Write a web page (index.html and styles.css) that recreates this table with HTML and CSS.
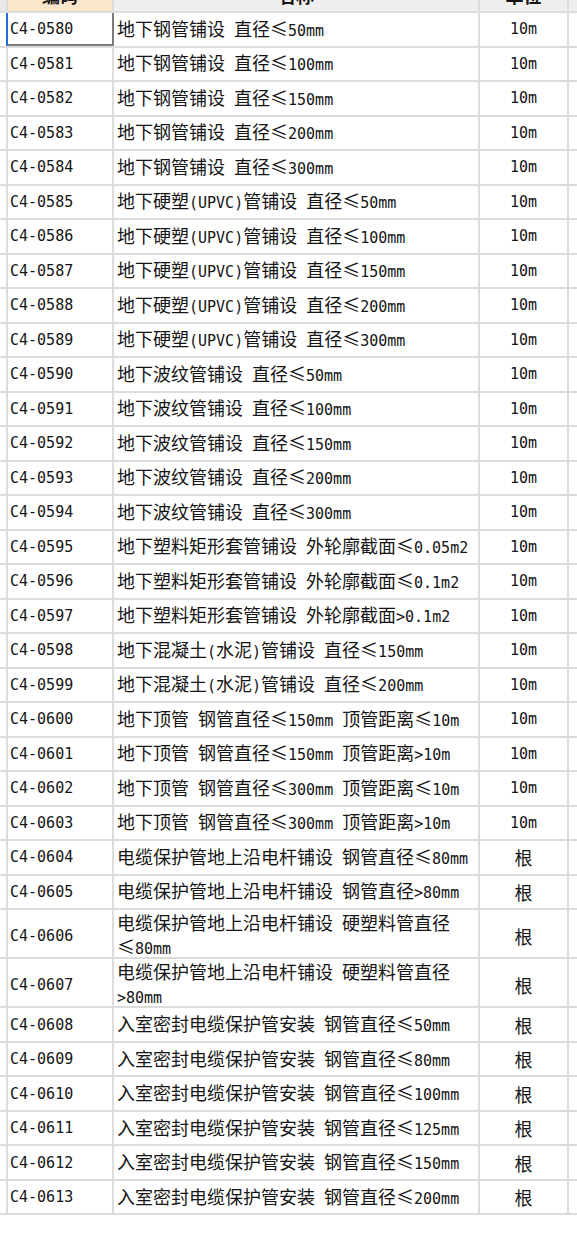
FILE: index.html
```html
<!DOCTYPE html>
<html lang="zh-CN">
<head>
<meta charset="utf-8">
<link rel="stylesheet" href="styles.css">
</head>
<body>
<div class="sheet">
  <div class="row head">
    <div class="strip"></div>
    <div class="c code-h">编码</div>
    <div class="c name-h">名称</div>
    <div class="c unit-h">单位</div>
    <div class="edge"></div>
  </div>
  <div class="row"><div class="strip"></div><div class="c code sel">C4-0580</div><div class="c name"><span class="t">地下钢管铺设 直径≤<span class="a">50mm</span></span></div><div class="c unit"><span class="a">10m</span></div><div class="edge"></div></div>
  <div class="row"><div class="strip"></div><div class="c code">C4-0581</div><div class="c name"><span class="t">地下钢管铺设 直径≤<span class="a">100mm</span></span></div><div class="c unit"><span class="a">10m</span></div><div class="edge"></div></div>
  <div class="row"><div class="strip"></div><div class="c code">C4-0582</div><div class="c name"><span class="t">地下钢管铺设 直径≤<span class="a">150mm</span></span></div><div class="c unit"><span class="a">10m</span></div><div class="edge"></div></div>
  <div class="row"><div class="strip"></div><div class="c code">C4-0583</div><div class="c name"><span class="t">地下钢管铺设 直径≤<span class="a">200mm</span></span></div><div class="c unit"><span class="a">10m</span></div><div class="edge"></div></div>
  <div class="row"><div class="strip"></div><div class="c code">C4-0584</div><div class="c name"><span class="t">地下钢管铺设 直径≤<span class="a">300mm</span></span></div><div class="c unit"><span class="a">10m</span></div><div class="edge"></div></div>
  <div class="row"><div class="strip"></div><div class="c code">C4-0585</div><div class="c name"><span class="t">地下硬塑<span class="a">(UPVC)</span>管铺设 直径≤<span class="a">50mm</span></span></div><div class="c unit"><span class="a">10m</span></div><div class="edge"></div></div>
  <div class="row"><div class="strip"></div><div class="c code">C4-0586</div><div class="c name"><span class="t">地下硬塑<span class="a">(UPVC)</span>管铺设 直径≤<span class="a">100mm</span></span></div><div class="c unit"><span class="a">10m</span></div><div class="edge"></div></div>
  <div class="row"><div class="strip"></div><div class="c code">C4-0587</div><div class="c name"><span class="t">地下硬塑<span class="a">(UPVC)</span>管铺设 直径≤<span class="a">150mm</span></span></div><div class="c unit"><span class="a">10m</span></div><div class="edge"></div></div>
  <div class="row"><div class="strip"></div><div class="c code">C4-0588</div><div class="c name"><span class="t">地下硬塑<span class="a">(UPVC)</span>管铺设 直径≤<span class="a">200mm</span></span></div><div class="c unit"><span class="a">10m</span></div><div class="edge"></div></div>
  <div class="row"><div class="strip"></div><div class="c code">C4-0589</div><div class="c name"><span class="t">地下硬塑<span class="a">(UPVC)</span>管铺设 直径≤<span class="a">300mm</span></span></div><div class="c unit"><span class="a">10m</span></div><div class="edge"></div></div>
  <div class="row"><div class="strip"></div><div class="c code">C4-0590</div><div class="c name"><span class="t">地下波纹管铺设 直径≤<span class="a">50mm</span></span></div><div class="c unit"><span class="a">10m</span></div><div class="edge"></div></div>
  <div class="row"><div class="strip"></div><div class="c code">C4-0591</div><div class="c name"><span class="t">地下波纹管铺设 直径≤<span class="a">100mm</span></span></div><div class="c unit"><span class="a">10m</span></div><div class="edge"></div></div>
  <div class="row"><div class="strip"></div><div class="c code">C4-0592</div><div class="c name"><span class="t">地下波纹管铺设 直径≤<span class="a">150mm</span></span></div><div class="c unit"><span class="a">10m</span></div><div class="edge"></div></div>
  <div class="row"><div class="strip"></div><div class="c code">C4-0593</div><div class="c name"><span class="t">地下波纹管铺设 直径≤<span class="a">200mm</span></span></div><div class="c unit"><span class="a">10m</span></div><div class="edge"></div></div>
  <div class="row"><div class="strip"></div><div class="c code">C4-0594</div><div class="c name"><span class="t">地下波纹管铺设 直径≤<span class="a">300mm</span></span></div><div class="c unit"><span class="a">10m</span></div><div class="edge"></div></div>
  <div class="row"><div class="strip"></div><div class="c code">C4-0595</div><div class="c name"><span class="t">地下塑料矩形套管铺设 外轮廓截面≤<span class="a">0.05m2</span></span></div><div class="c unit"><span class="a">10m</span></div><div class="edge"></div></div>
  <div class="row"><div class="strip"></div><div class="c code">C4-0596</div><div class="c name"><span class="t">地下塑料矩形套管铺设 外轮廓截面≤<span class="a">0.1m2</span></span></div><div class="c unit"><span class="a">10m</span></div><div class="edge"></div></div>
  <div class="row"><div class="strip"></div><div class="c code">C4-0597</div><div class="c name"><span class="t">地下塑料矩形套管铺设 外轮廓截面<span class="a">&gt;0.1m2</span></span></div><div class="c unit"><span class="a">10m</span></div><div class="edge"></div></div>
  <div class="row"><div class="strip"></div><div class="c code">C4-0598</div><div class="c name"><span class="t">地下混凝土<span class="a">(</span>水泥<span class="a">)</span>管铺设 直径≤<span class="a">150mm</span></span></div><div class="c unit"><span class="a">10m</span></div><div class="edge"></div></div>
  <div class="row"><div class="strip"></div><div class="c code">C4-0599</div><div class="c name"><span class="t">地下混凝土<span class="a">(</span>水泥<span class="a">)</span>管铺设 直径≤<span class="a">200mm</span></span></div><div class="c unit"><span class="a">10m</span></div><div class="edge"></div></div>
  <div class="row"><div class="strip"></div><div class="c code">C4-0600</div><div class="c name"><span class="t">地下顶管 钢管直径≤<span class="a">150mm</span> 顶管距离≤<span class="a">10m</span></span></div><div class="c unit"><span class="a">10m</span></div><div class="edge"></div></div>
  <div class="row"><div class="strip"></div><div class="c code">C4-0601</div><div class="c name"><span class="t">地下顶管 钢管直径≤<span class="a">150mm</span> 顶管距离<span class="a">&gt;10m</span></span></div><div class="c unit"><span class="a">10m</span></div><div class="edge"></div></div>
  <div class="row"><div class="strip"></div><div class="c code">C4-0602</div><div class="c name"><span class="t">地下顶管 钢管直径≤<span class="a">300mm</span> 顶管距离≤<span class="a">10m</span></span></div><div class="c unit"><span class="a">10m</span></div><div class="edge"></div></div>
  <div class="row"><div class="strip"></div><div class="c code">C4-0603</div><div class="c name"><span class="t">地下顶管 钢管直径≤<span class="a">300mm</span> 顶管距离<span class="a">&gt;10m</span></span></div><div class="c unit"><span class="a">10m</span></div><div class="edge"></div></div>
  <div class="row"><div class="strip"></div><div class="c code">C4-0604</div><div class="c name"><span class="t">电缆保护管地上沿电杆铺设 钢管直径≤<span class="a">80mm</span></span></div><div class="c unit">根</div><div class="edge"></div></div>
  <div class="row"><div class="strip"></div><div class="c code">C4-0605</div><div class="c name"><span class="t">电缆保护管地上沿电杆铺设 钢管直径<span class="a">&gt;80mm</span></span></div><div class="c unit">根</div><div class="edge"></div></div>
  <div class="row tall"><div class="strip"></div><div class="c code">C4-0606</div><div class="c name"><span class="t">电缆保护管地上沿电杆铺设 硬塑料管直径≤<span class="a">80mm</span></span></div><div class="c unit">根</div><div class="edge"></div></div>
  <div class="row tall"><div class="strip"></div><div class="c code">C4-0607</div><div class="c name"><span class="t">电缆保护管地上沿电杆铺设 硬塑料管直径<span class="a">&gt;80mm</span></span></div><div class="c unit">根</div><div class="edge"></div></div>
  <div class="row"><div class="strip"></div><div class="c code">C4-0608</div><div class="c name"><span class="t">入室密封电缆保护管安装 钢管直径≤<span class="a">50mm</span></span></div><div class="c unit">根</div><div class="edge"></div></div>
  <div class="row"><div class="strip"></div><div class="c code">C4-0609</div><div class="c name"><span class="t">入室密封电缆保护管安装 钢管直径≤<span class="a">80mm</span></span></div><div class="c unit">根</div><div class="edge"></div></div>
  <div class="row"><div class="strip"></div><div class="c code">C4-0610</div><div class="c name"><span class="t">入室密封电缆保护管安装 钢管直径≤<span class="a">100mm</span></span></div><div class="c unit">根</div><div class="edge"></div></div>
  <div class="row"><div class="strip"></div><div class="c code">C4-0611</div><div class="c name"><span class="t">入室密封电缆保护管安装 钢管直径≤<span class="a">125mm</span></span></div><div class="c unit">根</div><div class="edge"></div></div>
  <div class="row"><div class="strip"></div><div class="c code">C4-0612</div><div class="c name"><span class="t">入室密封电缆保护管安装 钢管直径≤<span class="a">150mm</span></span></div><div class="c unit">根</div><div class="edge"></div></div>
  <div class="row"><div class="strip"></div><div class="c code">C4-0613</div><div class="c name"><span class="t">入室密封电缆保护管安装 钢管直径≤<span class="a">200mm</span></span></div><div class="c unit">根</div><div class="edge"></div></div>
</div>
</body>
</html>
```

FILE: styles.css
```css
html, body {
  margin: 0;
  padding: 0;
  background: #ffffff;
  overflow: hidden;
}
body {
  font-family: "Noto Sans CJK SC", "Noto Sans", sans-serif;
  font-size: 18px;
  color: #141414;
}
.sheet {
  margin-top: -21.5px;
}
.row {
  display: grid;
  grid-template-columns: 8px 106px 366px 89px 1fr;
  height: 34.5px;
  box-sizing: border-box;
  border-bottom: 2px solid #dcdcdc;
}
.row.tall {
  height: 49.2px;
}
.strip, .c {
  border-right: 2px solid #dcdcdc;
  box-sizing: border-box;
}
.c {
  display: flex;
  align-items: center;
  line-height: 24px;
  min-width: 0;
}
.a, .code {
  font-family: "DejaVu Sans Mono", "Liberation Mono", monospace;
  font-size: 15px;
}
.code {
  padding-left: 2px;
}
.name {
  padding-left: 3px;
  padding-right: 6px;
}
.t {
  display: block;
  word-spacing: 5px;
}
.unit {
  justify-content: center;
}
.head .c {
  justify-content: center;
  font-weight: bold;
}
.head .strip {
  background: #e8e8e8;
}
.head .code-h {
  background: #fce6cb;
}
.head .name-h, .head .unit-h, .head .edge {
  background: #efefef;
}
.sel {
  position: relative;
  border-right-color: #7c7c7c;
  box-shadow: inset 0 -2px 0 #7c7c7c;
}
.sel::before {
  content: "";
  position: absolute;
  left: -2px;
  top: 0;
  bottom: 0;
  width: 2px;
  background: #1f6fdc;
}
```
